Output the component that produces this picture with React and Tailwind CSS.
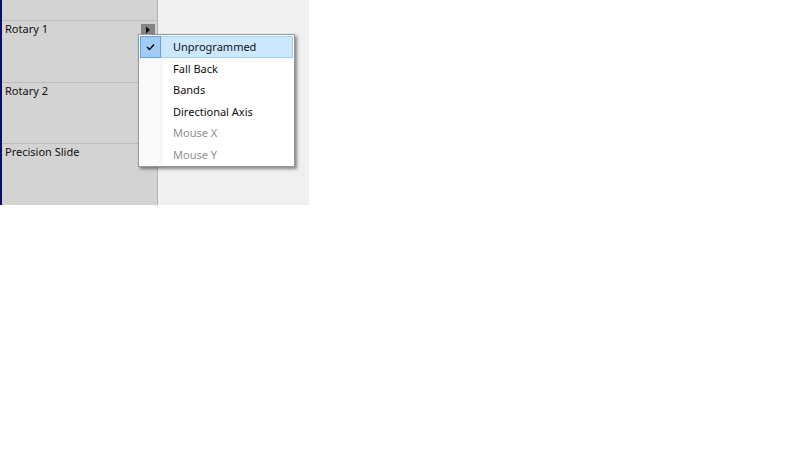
import React from "react";

const font = { fontFamily: '"Noto Sans", "Open Sans", sans-serif' };

function Row({ label, children }) {
  return (
    <div className="relative h-[62px] border-t border-[#bcbcbc] pl-[3px] text-[11px] leading-[16px] text-[#101010]">
      <div>{label}</div>
      {children}
    </div>
  );
}

export default function App() {
  const items = [
    { t: "Unprogrammed", h: "h-[22px]", sel: true },
    { t: "Fall Back", h: "h-[21px]" },
    { t: "Bands", h: "h-[22px]" },
    { t: "Directional Axis", h: "h-[21px]" },
    { t: "Mouse X", h: "h-[22px]", dis: true },
    { t: "Mouse Y", h: "h-[21px]", dis: true },
  ];
  return (
    <div className="relative h-[450px] w-[800px] bg-white" style={font}>
      <div className="flex h-[205px] w-[309px]">
        <div className="flex h-full w-[158px] flex-col border-l-2 border-r border-l-[#0a0a78] border-r-[#b4b4b4] bg-[#d3d3d3]">
          <div className="h-[20px]" />
          <Row label="Rotary 1">
            <div className="absolute right-[2px] top-[3px] flex h-[12px] w-[14px] items-center justify-center bg-[#858585]">
              <svg width="6" height="8" viewBox="0 0 6 8">
                <path d="M1 0.5 L5 4 L1 7.5 Z" fill="#000" />
              </svg>
            </div>
          </Row>
          <Row label="Rotary 2" />
          <Row label="Precision Slide" />
        </div>
        <div className="h-full flex-1 bg-[#f0f0f0]" />
      </div>

      <div className="absolute left-[138px] top-[34px] w-[157px] border border-[#979797] bg-white p-[1px] shadow-[2px_2px_3px_rgba(0,0,0,0.45)]">
        <div className="relative">
          <div className="absolute left-0 top-0 h-full w-[22px] border-r border-[#f0f0f0] bg-[#f9f9f9]" />
          {items.map((it) => (
            <div
              key={it.t}
              className={`relative flex ${it.h} items-center ${
                it.sel ? "border border-[#99d1ff] bg-[#cce8ff]" : "border border-transparent"
              }`}
            >
              <div className="flex h-full w-[20px] items-center justify-center">
                {it.sel && (
                  <div className="flex h-[22px] w-[21px] -ml-[1px] items-center justify-center border border-[#62a2e4] bg-[#a0cdf6]">
                    <svg width="9" height="8" viewBox="0 0 9 8">
                      <path d="M1 4 L3.5 6.5 L8 1.5" stroke="#000" strokeWidth="1.4" fill="none" />
                    </svg>
                  </div>
                )}
              </div>
              <span
                className={`ml-[12px] text-[11px] leading-[16px] ${
                  it.dis ? "text-[#8f8f8f]" : "text-[#101010]"
                }`}
              >
                {it.t}
              </span>
            </div>
          ))}
        </div>
      </div>
    </div>
  );
}
